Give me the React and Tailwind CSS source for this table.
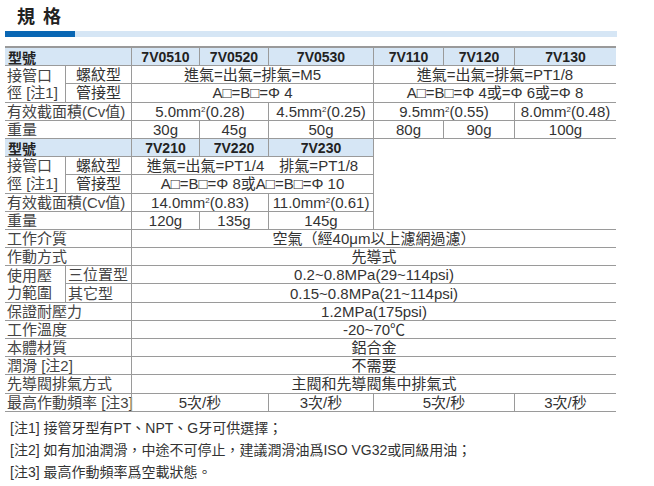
import React from 'react';

const cell = 'flex items-center border-b border-[#9a9a9a] leading-none whitespace-nowrap';

const Head = ({ children, className = '' }) => (
  <div className={`${cell} bg-[#d6e6f5] font-bold text-[14px] text-[#222] ${className}`}>{children}</div>
);

const Label = ({ children, className = '' }) => (
  <div className={`${cell} pl-[2px] text-[15px] text-[#444] ${className}`}>{children}</div>
);

const Val = ({ children, className = '' }) => (
  <div className={`${cell} justify-center border-l text-[15px] text-[#333] ${className}`}>{children}</div>
);

const Mm = ({ a, b }) => (
  <span>
    {a}mm<sup className="text-[8px] -top-[5px]">2</sup>({b})
  </span>
);

const TwoLine = ({ top, bottom }) => (
  <div className={`${cell} row-span-2 flex-col items-start justify-center pl-[2px] text-[15px] text-[#444]`}>
    <span className="h-[18px] flex items-center">{top}</span>
    <span className="h-[18px] flex items-center">{bottom}</span>
  </div>
);

const models1 = ['7V0510', '7V0520', '7V0530', '7V110', '7V120', '7V130'];
const models2 = ['7V210', '7V220', '7V230'];
const common = [
  ['工作介質', '空氣（經40μm以上濾網過濾）'],
  ['作動方式', '先導式'],
];
const common2 = [
  ['保證耐壓力', '1.2MPa(175psi)'],
  ['工作溫度', '-20~70℃'],
  ['本體材質', '鋁合金'],
  ['潤滑 [注2]', '不需要'],
  ['先導閥排氣方式', '主閥和先導閥集中排氣式'],
];

export default function App() {
  return (
    <div className="w-[654px] h-[486px] bg-white font-['Liberation_Sans','Noto_Sans_CJK_TC',sans-serif] overflow-hidden">
      <h1 className="pl-[17px] pt-[4px] text-[18px] font-bold text-[#222] tracking-[8px] leading-[22px] font-['Noto_Sans_CJK_TC',sans-serif]">
        規格
      </h1>
      <div className="mt-[5px] ml-[5px] w-[612px] h-[6px] flex bg-[#d6e6f5]">
        <div className="w-[70px] bg-[#0a67b4]" />
      </div>

      <div className="mt-[9px] ml-[5px] w-[611px] border-t-2 border-[#9a9a9a] grid grid-cols-[60px_66px_68px_69px_105px_70px_71px_102px] auto-rows-[18.2px]">
        <Head className="col-span-2 pl-[3px] font-['Noto_Sans_CJK_TC',sans-serif]">型號</Head>
        {models1.map((m) => (
          <Head key={m} className="justify-center border-l">{m}</Head>
        ))}

        <TwoLine top="接管口" bottom="徑 [注1]" />
        <Val>螺紋型</Val>
        <Val className="col-span-3">進氣=出氣=排氣=M5</Val>
        <Val className="col-span-3">進氣=出氣=排氣=PT1/8</Val>
        <Val>管接型</Val>
        <Val className="col-span-3">A□=B□=Φ 4</Val>
        <Val className="col-span-3">A□=B□=Φ 4或=Φ 6或=Φ 8</Val>

        <Label className="col-span-2">有效截面積(Cv值)</Label>
        <Val className="col-span-2"><Mm a="5.0" b="0.28" /></Val>
        <Val><Mm a="4.5" b="0.25" /></Val>
        <Val className="col-span-2"><Mm a="9.5" b="0.55" /></Val>
        <Val><Mm a="8.0" b="0.48" /></Val>

        <Label className="col-span-2">重量</Label>
        {['30g', '45g', '50g', '80g', '90g', '100g'].map((w) => (
          <Val key={w}>{w}</Val>
        ))}

        <Head className="col-span-2 pl-[3px] font-['Noto_Sans_CJK_TC',sans-serif]">型號</Head>
        {models2.map((m) => (
          <Head key={m} className="justify-center border-l">{m}</Head>
        ))}
        <div className="col-span-3 row-span-5 border-l border-b border-[#9a9a9a]" />

        <TwoLine top="接管口" bottom="徑 [注1]" />
        <Val>螺紋型</Val>
        <Val className="col-span-3">進氣=出氣=PT1/4　排氣=PT1/8</Val>
        <Val>管接型</Val>
        <Val className="col-span-3">A□=B□=Φ 8或A□=B□=Φ 10</Val>

        <Label className="col-span-2">有效截面積(Cv值)</Label>
        <Val className="col-span-2"><Mm a="14.0" b="0.83" /></Val>
        <Val><Mm a="11.0" b="0.61" /></Val>

        <Label className="col-span-2">重量</Label>
        {['120g', '135g', '145g'].map((w) => (
          <Val key={w}>{w}</Val>
        ))}

        {common.map(([l, v]) => (
          <React.Fragment key={l}>
            <Label className="col-span-2">{l}</Label>
            <Val className="col-span-6">{v}</Val>
          </React.Fragment>
        ))}

        <TwoLine top="使用壓" bottom="力範圍" />
        <Val className="justify-start pl-[2px] text-[#444]">三位置型</Val>
        <Val className="col-span-6">0.2~0.8MPa(29~114psi)</Val>
        <Val className="justify-start pl-[2px] text-[#444]">其它型</Val>
        <Val className="col-span-6">0.15~0.8MPa(21~114psi)</Val>

        {common2.map(([l, v]) => (
          <React.Fragment key={l}>
            <Label className="col-span-2">{l}</Label>
            <Val className="col-span-6">{v}</Val>
          </React.Fragment>
        ))}

        <Label className="col-span-2">最高作動頻率 [注3]</Label>
        <Val className="col-span-2">5次/秒</Val>
        <Val>3次/秒</Val>
        <Val className="col-span-2">5次/秒</Val>
        <Val>3次/秒</Val>
      </div>

      <div className="mt-[5px] pl-[10px] text-[14px] text-[#333] leading-[22px]">
        <p>[注1] 接管牙型有PT、NPT、G牙可供選擇；</p>
        <p>[注2] 如有加油潤滑，中途不可停止，建議潤滑油爲ISO VG32或同級用油；</p>
        <p>[注3] 最高作動頻率爲空載狀態。</p>
      </div>
    </div>
  );
}
